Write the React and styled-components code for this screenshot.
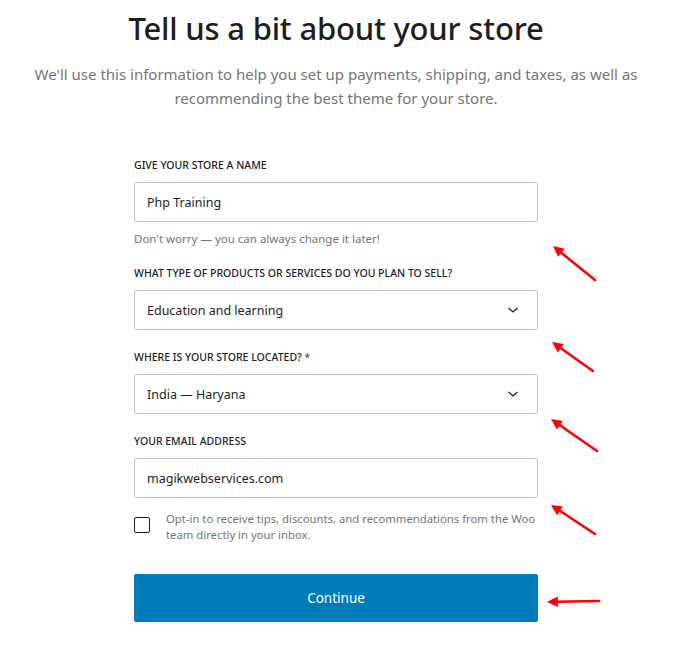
import styled, { createGlobalStyle } from "styled-components";

const GlobalStyle = createGlobalStyle`
  body {
    margin: 0;
    background: #fff;
    font-family: "Noto Sans", "Open Sans", sans-serif;
    color: #1e1e1e;
  }
`;

const Page = styled.div`
  position: relative;
  width: 672px;
  padding-top: 8px;
  display: flex;
  flex-direction: column;
  align-items: center;
`;

const Title = styled.h1`
  margin: 0;
  font-size: 31px;
  font-weight: 500;
  line-height: 40px;
  color: #1e1e1e;
  letter-spacing: -0.2px;
`;

const Subtitle = styled.p`
  margin: 14px 0 0;
  width: 610px;
  text-align: center;
  font-size: 15px;
  line-height: 24px;
  color: #757575;
`;

const Form = styled.div`
  width: 404px;
  margin-top: 47px;
  display: flex;
  flex-direction: column;
`;

const Field = styled.div`
  display: flex;
  flex-direction: column;
  margin-bottom: ${(p) => p.$gap ?? 20}px;
`;

const Label = styled.label`
  display: block;
  font-size: 10.5px;
  font-weight: 500;
  text-transform: uppercase;
  height: 16px;
  line-height: 16px;
  margin-bottom: 9px;
  color: #1e1e1e;

  span {
    color: #cc1818;
  }
`;

const Box = styled.div`
  box-sizing: border-box;
  height: 40px;
  border: 1px solid #c3c4c7;
  border-radius: 3px;
  padding: 0 18px 0 12px;
  display: flex;
  align-items: center;
  justify-content: space-between;
  font-size: 12.5px;
  color: #1e1e1e;
`;

const Help = styled.div`
  margin-top: 9px;
  font-size: 11.5px;
  line-height: 16px;
  color: #757575;
`;

const OptIn = styled.div`
  display: flex;
  align-items: flex-start;
  gap: 16px;
`;

const Check = styled.div`
  box-sizing: border-box;
  flex: none;
  width: 16px;
  height: 16px;
  margin-top: 6px;
  border: 1.5px solid #1e1e1e;
  border-radius: 2px;
`;

const OptText = styled.div`
  font-size: 11.3px;
  line-height: 16px;
  color: #757575;
`;

const Button = styled.button`
  margin-top: 31px;
  height: 48px;
  border: none;
  border-radius: 2px;
  background: #007cba;
  color: #fff;
  font-family: inherit;
  font-size: 13.5px;
`;

const Arrows = styled.svg`
  position: absolute;
  left: 0;
  top: 0;
  pointer-events: none;
`;

const Chevron = () => (
  <svg width="12" height="12" viewBox="0 0 24 24" fill="none" stroke="#1e1e1e" strokeWidth="2.6">
    <path d="M3 8l9 8 9-8" />
  </svg>
);

const arrows = [
  [595, 280, 553, 246],
  [593, 371, 552, 342],
  [597, 451, 551, 419],
  [595, 534, 551, 505],
  [599, 601, 547, 602],
];

const Arrow = ({ x1, y1, x2, y2 }) => {
  const a = Math.atan2(y2 - y1, x2 - x1);
  const len = 12;
  const w = 0.45;
  const p1 = [x2 - len * Math.cos(a - w), y2 - len * Math.sin(a - w)];
  const p2 = [x2 - len * Math.cos(a + w), y2 - len * Math.sin(a + w)];
  const bx = x2 - len * 0.8 * Math.cos(a);
  const by = y2 - len * 0.8 * Math.sin(a);
  return (
    <g>
      <line x1={x1} y1={y1} x2={bx} y2={by} stroke="#f00" strokeWidth="2.6" strokeLinecap="round" />
      <polygon points={`${x2},${y2} ${p1[0]},${p1[1]} ${p2[0]},${p2[1]}`} fill="#f00" />
    </g>
  );
};

export default function App() {
  return (
    <>
      <GlobalStyle />
      <Page>
        <Title>Tell us a bit about your store</Title>
        <Subtitle>
          We'll use this information to help you set up payments, shipping, and taxes, as well as
          recommending the best theme for your store.
        </Subtitle>
        <Form>
          <Field $gap={18}>
            <Label>Give your store a name</Label>
            <Box>Php Training</Box>
            <Help>Don't worry — you can always change it later!</Help>
          </Field>
          <Field $gap={19}>
            <Label>What type of products or services do you plan to sell?</Label>
            <Box>
              Education and learning
              <Chevron />
            </Box>
          </Field>
          <Field $gap={19}>
            <Label>
              Where is your store located? <span>*</span>
            </Label>
            <Box>
              India — Haryana
              <Chevron />
            </Box>
          </Field>
          <Field $gap={13}>
            <Label>Your email address</Label>
            <Box>magikwebservices.com</Box>
          </Field>
          <OptIn>
            <Check />
            <OptText>
              Opt-in to receive tips, discounts, and recommendations from the Woo team directly in
              your inbox.
            </OptText>
          </OptIn>
          <Button>Continue</Button>
        </Form>
        <Arrows width="695" height="656">
          {arrows.map(([x1, y1, x2, y2], i) => (
            <Arrow key={i} x1={x1} y1={y1} x2={x2} y2={y2} />
          ))}
        </Arrows>
      </Page>
    </>
  );
}
